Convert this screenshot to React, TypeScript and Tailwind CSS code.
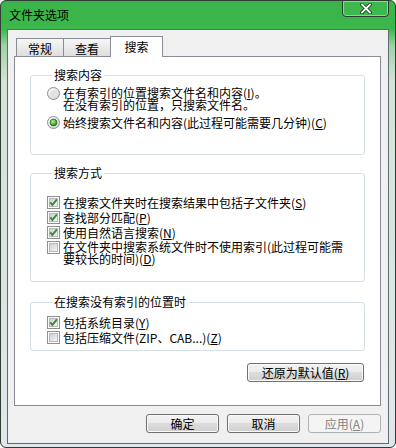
import React from "react";

function Check({ on }: { on?: boolean }) {
  return (
    <svg width="13" height="13" viewBox="0 0 13 13" className="shrink-0">
      <defs>
        <linearGradient id="cbIn" x1="0" y1="0" x2="1" y2="1">
          <stop offset="0" stopColor="#c9cdd3" />
          <stop offset="1" stopColor="#f7f7f7" />
        </linearGradient>
      </defs>
      <rect x="0.5" y="0.5" width="12" height="12" fill="#fff" stroke="#8f8f8f" />
      <rect x="2.5" y="2.5" width="8" height="8" fill="url(#cbIn)" stroke="#b4b9be" />
      {on && <path d="M3.2 6.3 L5.4 8.9 L9.9 3.3" fill="none" stroke="#3f8c34" strokeWidth="1.9" />}
    </svg>
  );
}

function Radio({ on }: { on?: boolean }) {
  return (
    <svg width="13" height="13" viewBox="0 0 13 13" className="shrink-0">
      <defs>
        <radialGradient id="rdOut" cx="0.35" cy="0.3" r="0.8">
          <stop offset="0" stopColor="#ffffff" />
          <stop offset="1" stopColor="#d2d2d2" />
        </radialGradient>
        <radialGradient id="rdOn" cx="0.4" cy="0.35" r="0.7">
          <stop offset="0" stopColor="#b8f29c" />
          <stop offset="0.6" stopColor="#4fb83a" />
          <stop offset="1" stopColor="#1f6e1a" />
        </radialGradient>
      </defs>
      <circle cx="6.5" cy="6.5" r="6" fill="url(#rdOut)" stroke="#8e8f8f" />
      {on ? (
        <circle cx="6.5" cy="6.5" r="3.4" fill="url(#rdOn)" stroke="#2d5f27" strokeWidth="0.8" />
      ) : (
        <circle cx="6.5" cy="6.5" r="3.6" fill="#e2e2e2" />
      )}
    </svg>
  );
}

function Row({ control, tight, children }: { control: React.ReactNode; tight?: boolean; children: React.ReactNode }) {
  return (
    <div className="flex items-start gap-[3px]">
      {control}
      <span className={tight ? "leading-[12px]" : "leading-[13px]"}>{children}</span>
    </div>
  );
}

function Group({ title, className, children }: { title: string; className: string; children: React.ReactNode }) {
  return (
    <fieldset className={`mx-[15px] rounded-[3px] border border-[#d5dfe5] pl-[16px] ${className}`}>
      <legend className="ml-[5px] px-[2px] leading-[14px]">{title}</legend>
      {children}
    </fieldset>
  );
}

function Btn({ children, disabled, className = "w-[73px]" }: { children: React.ReactNode; disabled?: boolean; className?: string }) {
  return disabled ? (
    <button className={`h-[19px] ${className} rounded-[3px] border border-[#adb2b5] bg-[#f4f4f4] leading-[17px] text-[#838383]`}>
      {children}
    </button>
  ) : (
    <button
      className={`h-[19px] ${className} rounded-[3px] border border-[#707070] bg-[linear-gradient(180deg,#f2f2f2_0%,#ebebeb_50%,#dddddd_50%,#cfcfcf_100%)] leading-[17px] text-black shadow-[inset_0_0_0_1px_#fbfbfb]`}
    >
      {children}
    </button>
  );
}

export default function App() {
  return (
    <div className="relative flex h-[448px] w-[396px] flex-col rounded-[6px] border border-[#2f3d33] bg-[linear-gradient(180deg,#3ab44a_0px,#3cb74c_28px,#9fd2a6_45px,#d4e2d8_80px,#e1e7ea_100%)] font-['Noto_Sans_CJK_SC',sans-serif] text-[12px] text-black">
      {/* title bar */}
      <div className="flex h-[28px] items-center pl-[8px] leading-[14px]">文件夹选项</div>
      <div className="absolute -top-px right-[6px] flex h-[17px] w-[47px] items-center justify-center rounded-b-[4px] border border-[#2e3a31] bg-[#3cb84c] shadow-[inset_0_0_0_1px_#8fd49a]">
        <svg width="12" height="11" viewBox="0 0 12 11">
          <path d="M2 1.5 L10 9.5 M10 1.5 L2 9.5" stroke="#1e3a22" strokeWidth="3.6" strokeLinecap="square" />
          <path d="M2 1.5 L10 9.5 M10 1.5 L2 9.5" stroke="#ffffff" strokeWidth="1.8" strokeLinecap="square" />
        </svg>
      </div>

      {/* client area */}
      <div className="mx-[6px] mb-[3px] flex flex-1 flex-col border border-[#5d6b73] bg-[#f0f0f0]">
        {/* tabs */}
        <div className="mt-[6px] flex h-[20px] items-end pl-[8px]">
          <div className="h-[18px] w-[48px] border-x border-t border-[#898c95] bg-[linear-gradient(180deg,#f6f6f6,#dedede)] pt-[3px] text-center leading-[14px]">
            常规
          </div>
          <div className="-ml-px h-[18px] w-[48px] border-x border-t border-[#898c95] bg-[linear-gradient(180deg,#f6f6f6,#dedede)] pt-[3px] text-center leading-[14px]">
            查看
          </div>
          <div className="relative z-10 -mb-px -ml-px h-[21px] w-[53px] border-x border-t border-[#898c95] bg-white pt-[3px] text-center leading-[14px]">
            搜索
          </div>
        </div>

        {/* panel */}
        <div className="ml-[6px] mr-[7px] flex h-[350px] flex-col border border-[#898c95] bg-white">
          <Group title="搜索内容" className="mt-[11px] h-[87px] pt-[5px]">
            <Row control={<Radio />} tight>
              在有索引的位置搜索文件名和内容(<u>I</u>)。
              <br />
              在没有索引的位置，只搜索文件名。
            </Row>
            <div className="mt-[5px]">
              <Row control={<Radio on />}>
                始终搜索文件名和内容(此过程可能需要几分钟)(<u>C</u>)
              </Row>
            </div>
          </Group>

          <Group title="搜索方式" className="mt-[11px] h-[116px] pt-[16px]">
            <div className="flex flex-col gap-[2px]">
              <Row control={<Check on />}>
                在搜索文件夹时在搜索结果中包括子文件夹(<u>S</u>)
              </Row>
              <Row control={<Check on />}>
                查找部分匹配(<u>P</u>)
              </Row>
              <Row control={<Check on />}>
                使用自然语言搜索(<u>N</u>)
              </Row>
              <Row control={<Check />} tight>
                在文件夹中搜索系统文件时不使用索引(此过程可能需
                <br />
                要较长的时间)(<u>D</u>)
              </Row>
            </div>
          </Group>

          <Group title="在搜索没有索引的位置时" className="mt-[13px] h-[56px] pt-[7px]">
            <div className="flex flex-col gap-[2px]">
              <Row control={<Check on />}>
                包括系统目录(<u>Y</u>)
              </Row>
              <Row control={<Check />}>
                包括压缩文件(ZIP、CAB...)(<u>Z</u>)
              </Row>
            </div>
          </Group>

          <div className="mr-[16px] mt-[12px] flex justify-end">
            <Btn className="w-[117px]">
              还原为默认值(<u>R</u>)
            </Btn>
          </div>
        </div>

        {/* dialog buttons */}
        <div className="mr-[7px] mt-[8px] flex justify-end gap-[8px]">
          <Btn>确定</Btn>
          <Btn>取消</Btn>
          <Btn disabled>
            应用(<u>A</u>)
          </Btn>
        </div>
      </div>
    </div>
  );
}
